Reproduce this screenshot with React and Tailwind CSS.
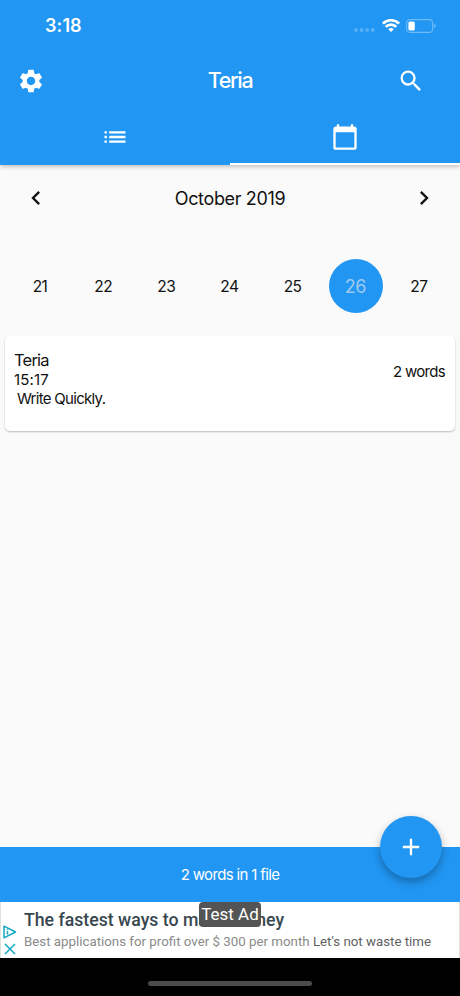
import React, { useState } from 'react';
import {
  MdAdd,
  MdCalendarToday,
  MdChevronLeft,
  MdChevronRight,
  MdList,
  MdSearch,
  MdSettings,
} from 'react-icons/md';

const DAYS = [21, 22, 23, 24, 25, 26, 27];

const ENTRIES = [
  { id: 1, title: 'Teria', time: '15:17', text: 'Write Quickly.', words: 2 },
];

function StatusBar() {
  return (
    <div className="h-[51px] flex items-center justify-between pl-[45px] pr-[24px]">
      <span className="text-[18px] leading-6 font-semibold tracking-[0.1px]">3:18</span>
      <div className="flex items-center">
        <svg className="mt-[8px] mr-[7px]" width="21" height="4" viewBox="0 0 21 4" fill="#fff" fillOpacity="0.25">
          <circle cx="2" cy="2" r="1.9" />
          <circle cx="7.6" cy="2" r="1.9" />
          <circle cx="13.2" cy="2" r="1.9" />
          <circle cx="18.8" cy="2" r="1.9" />
        </svg>
        <svg className="mr-[6px]" width="18" height="13" viewBox="0 0 18 13" fill="none" stroke="#fff" strokeWidth="2.7">
          <path d="M.9 4.6a11.4 11.4 0 0 1 16.2 0" />
          <path d="M3.7 7.9a7.5 7.5 0 0 1 10.6 0" />
          <path d="M9 13 6.3 10.3a3.8 3.8 0 0 1 5.4 0z" fill="#fff" stroke="none" />
        </svg>
        <svg width="30" height="14" viewBox="0 0 30 14">
          <rect x="0.6" y="0.6" width="26" height="12.8" rx="3.4" fill="none" stroke="#fff" strokeOpacity="0.35" strokeWidth="1.1" />
          <rect x="2.4" y="2.5" width="6.4" height="9" rx="1.6" fill="#fff" />
          <path d="M28.2 4.8v4.4c.9-.4 1.4-1.2 1.4-2.2s-.5-1.8-1.4-2.2z" fill="#fff" fillOpacity="0.4" />
        </svg>
      </div>
    </div>
  );
}

function Tab({ active, onClick, children }) {
  return (
    <button
      className={`flex-1 flex items-center justify-center border-b-2 pt-[1px] ${active ? 'border-white' : 'border-transparent'}`}
      onClick={onClick}
    >
      {children}
    </button>
  );
}

function Header({ tab, onTab }) {
  return (
    <header className="relative h-[165px] bg-[#2196f3] text-white shadow-[0_1px_5px_rgba(0,0,0,0.3)]">
      <StatusBar />
      <div className="h-[59px] grid grid-cols-[1fr_auto_1fr] items-center">
        <button className="justify-self-start ml-[17px]"><MdSettings className="size-[28px]" /></button>
        <h1 className="text-[21.5px] font-medium tracking-[-1.3px]">Teria</h1>
        <button className="justify-self-end mr-[35px]"><MdSearch className="size-[28px]" /></button>
      </div>
      <div className="h-[55px] flex">
        <Tab active={tab === 'list'} onClick={() => onTab('list')}><MdList className="size-[28px]" /></Tab>
        <Tab active={tab === 'calendar'} onClick={() => onTab('calendar')}><MdCalendarToday className="size-[28px]" /></Tab>
      </div>
    </header>
  );
}

function WeekCalendar({ selected, onSelect }) {
  return (
    <section>
      <div className="h-[66px] flex items-center justify-between px-[22px]">
        <button><MdChevronLeft className="size-[28px]" /></button>
        <h2 className="text-[18px] tracking-[-0.35px]">October 2019</h2>
        <button><MdChevronRight className="size-[28px]" /></button>
      </div>
      <div className="mt-[28px] px-[9px] grid grid-cols-7 justify-items-center">
        {DAYS.map(day => (
          <button
            key={day}
            className={`size-[54px] rounded-full ${day === selected ? 'pt-px pr-[2px] bg-[#2196f3] text-[#9fc9f0] text-[18px] tracking-[-0.6px]' : 'pt-[2px] pr-px text-[15.5px] tracking-[-0.5px]'}`}
            onClick={() => onSelect(day)}
          >
            {day}
          </button>
        ))}
      </div>
    </section>
  );
}

function EntryCard({ entry }) {
  return (
    <article className="h-[95px] mx-[5px] pl-[9px] pr-[10px] pt-[14px] flex justify-between bg-white rounded-[5px] shadow-[0_1px_2px_rgba(0,0,0,0.25)]">
      <div>
        <h3 className="text-[16.5px] leading-[20px] tracking-[-0.8px]">{entry.title}</h3>
        <p className="text-[15px] leading-[19px] tracking-[0.15px]">{entry.time}</p>
        <p className="pl-[3px] text-[15px] leading-[19px] tracking-[-0.7px]">{entry.text}</p>
      </div>
      <span className="mt-[12px] text-[15px] leading-[20px] tracking-[-0.7px]">{entry.words} words</span>
    </article>
  );
}

function AdBanner() {
  return (
    <div className="relative h-[56px] flex bg-white border-x border-[#e0e0e0] font-['Roboto',sans-serif]">
      <div className="w-[23px] pt-[23px] pl-[2px] flex flex-col gap-[4px]">
        <svg width="14" height="14" viewBox="0 0 14 14" fill="none" stroke="#12a9c4" strokeWidth="1.5" strokeLinejoin="round">
          <path d="M1 1.2 12.5 7 1 12.8z" />
          <path d="M4.5 6v3.5M4.5 3.8v1" />
        </svg>
        <svg width="14" height="12" viewBox="0 0 14 12" fill="none" stroke="#12a9c4" strokeWidth="1.5">
          <path d="M2 1l10 10M12 1 2 11" />
        </svg>
      </div>
      <div className="pt-[6px] whitespace-nowrap">
        <p className="text-[17.7px] leading-[25px] font-medium text-[#37474f]">The fastest ways to make money</p>
        <p className="text-[13.3px] leading-[18px] text-[#8a8a8a]">
          Best applications for profit over $ 300 per month <span className="text-[#616161]">Let's not waste time</span>
        </p>
      </div>
      <span className="absolute left-[198px] top-0 w-[62px] h-[25px] rounded-[4px] bg-[#545454] text-white text-[17px] leading-[25px] text-center whitespace-nowrap">Test Ad</span>
    </div>
  );
}

export default function App() {
  const [tab, setTab] = useState('calendar');
  const [selected, setSelected] = useState(26);

  const total = ENTRIES.reduce((sum, e) => sum + e.words, 0);

  return (
    <div className="w-[460px] h-[996px] flex flex-col overflow-hidden bg-[#fafafa] text-[#111] font-['Inter',sans-serif]">
      <Header tab={tab} onTab={setTab} />
      <main className="flex-1">
        <WeekCalendar selected={selected} onSelect={setSelected} />
        <div className="mt-[23px]">
          {ENTRIES.map(entry => <EntryCard key={entry.id} entry={entry} />)}
        </div>
      </main>
      <footer className="relative h-[55px] flex items-center justify-center bg-[#2196f3] text-white">
        <span className="pt-px text-[15px] tracking-[-0.65px]">{total} words in {ENTRIES.length} file</span>
        <button className="absolute right-[18px] -top-[31px] size-[62px] rounded-full flex items-center justify-center bg-[#2196f3] shadow-[0_4px_8px_rgba(0,0,0,0.3)]">
          <MdAdd className="size-[28px]" />
        </button>
      </footer>
      <AdBanner />
      <div className="h-[38px] flex justify-center items-end bg-black pb-[10px]">
        <div className="w-[164px] h-[5px] rounded-full bg-[#4c4c4c]" />
      </div>
    </div>
  );
}
